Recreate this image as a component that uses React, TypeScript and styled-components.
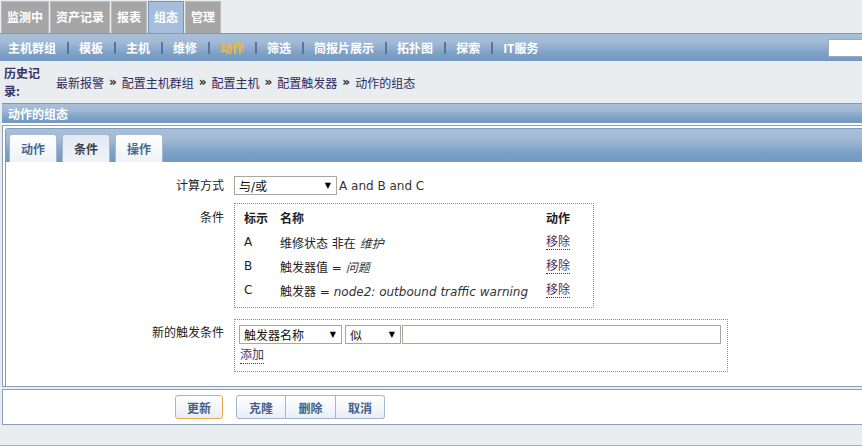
import React from "react";
import styled, { createGlobalStyle } from "styled-components";

const GlobalStyle = createGlobalStyle`
  * { box-sizing: border-box; }
  html, body { margin: 0; padding: 0; background: #e9edf0; overflow: hidden; }
  body {
    font-family: "DejaVu Sans", "Noto Sans CJK SC", sans-serif;
    font-size: 12px;
    color: #1f1f1f;
  }
  a { text-decoration: none; }
`;

const barGradient =
  "linear-gradient(to bottom, #a8bfd9 0%, #a3bad6 30%, #7da1c6 72%, #7398c0 100%)";

const Page = styled.div`
  width: 100%;
`;

const TopNav = styled.nav`
  display: flex;
  gap: 1px;
  height: 33px;
  padding: 1px 0 0 1px;
`;

const TopTab = styled.a<{ $active?: boolean }>`
  display: block;
  height: 32px;
  line-height: 30px;
  padding: 0 5px;
  border: 1px solid ${(p) => (p.$active ? "#7095bf" : "#bcbcbc")};
  border-bottom: none;
  background: ${(p) => (p.$active ? "#a6bedb" : "#a6a6a6")};
  color: #fff;
  font-weight: bold;
  font-family: "Noto Sans CJK SC", sans-serif;
`;

const SubNav = styled.div`
  display: flex;
  align-items: center;
  height: 28px;
  border-top: 1px solid #8698b1;
  background: ${barGradient};
  padding-left: 8px;
`;

const SubItem = styled.a<{ $active?: boolean }>`
  color: ${(p) => (p.$active ? "#f2b935" : "#fff")};
  font-weight: bold;
  font-family: "Noto Sans CJK SC", sans-serif;
`;

const SubSep = styled.span`
  width: 2px;
  height: 12px;
  background: #56749c;
  margin: 0 10px 0 11px;
`;

const Search = styled.input`
  margin-left: auto;
  width: 34px;
  height: 18px;
  padding: 0;
  border: 1px solid #9aabbf;
  border-right: none;
  background: #fff;
  outline: none;
`;

const Crumbs = styled.div`
  display: flex;
  align-items: center;
  height: 42px;
  padding-left: 4px;
`;

const CrumbLabel = styled.div`
  width: 40px;
  margin-right: 12px;
  line-height: 18px;
  font-weight: bold;
  color: #3c3466;
  font-family: "Noto Sans CJK SC", sans-serif;
`;

const CrumbLink = styled.a`
  color: #2e2b5f;
`;

const CrumbSep = styled.span`
  margin: 0 5px;
  font-weight: bold;
  font-size: 12px;
  color: #2a2a2a;
`;

const Section = styled.div`
  margin-left: 2px;
  background: #fff;
`;

const HeaderBar = styled.div`
  height: 20px;
  line-height: 19px;
  border-top: 1px solid #8698b1;
  background: ${barGradient};
  padding-left: 6px;
  color: #fff;
  font-weight: bold;
  font-family: "Noto Sans CJK SC", sans-serif;
`;

const FormBox = styled.div`
  margin-top: 2px;
  border: 1px solid #8c9fb6;
  border-right: none;
  padding: 2px 0 0 2px;
  background: #fff;
`;

const TabsBox = styled.div`
  border: 1px solid #7f9cbf;
  border-bottom: none;
  border-right: none;
  border-radius: 3px 0 0 0;
`;

const TabBar = styled.div`
  display: flex;
  align-items: flex-end;
  gap: 5px;
  height: 33px;
  padding-left: 3px;
  background: ${barGradient};
`;

const Tab = styled.a<{ $active?: boolean }>`
  display: block;
  height: 28px;
  line-height: 28px;
  padding: 0 11px;
  border: 1px solid #a5b8cf;
  border-bottom: none;
  border-radius: 3px 3px 0 0;
  background: ${(p) =>
    p.$active
      ? "linear-gradient(to bottom, #e2e9f2, #eef3f8)"
      : "linear-gradient(to bottom, #ffffff, #eef2f7)"};
  color: ${(p) => (p.$active ? "#3a3f4a" : "#4b6690")};
  font-weight: bold;
  font-family: "Noto Sans CJK SC", sans-serif;
`;

const Panel = styled.div`
  background: #fff;
  padding: 14px 0 14px 0;
`;

const FormRow = styled.div<{ $mt?: number }>`
  display: grid;
  grid-template-columns: 218px auto;
  column-gap: 10px;
  align-items: start;
  justify-content: start;
  margin-top: ${(p) => p.$mt ?? 0}px;
`;

const Label = styled.div<{ $pt?: number }>`
  text-align: right;
  line-height: 18px;
  padding-top: ${(p) => p.$pt ?? 0}px;
  color: #222;
`;

const Inline = styled.div`
  display: flex;
  align-items: center;
`;

const SelectBox = styled.div<{ $w: number; $ml?: number }>`
  display: inline-flex;
  align-items: center;
  justify-content: space-between;
  width: ${(p) => p.$w}px;
  height: 19px;
  margin-left: ${(p) => p.$ml ?? 0}px;
  border: 1px solid #a9a89d;
  background: #fff;
  padding: 0 5px 0 4px;
  color: #111;
  flex: none;
`;

const Arrow = styled.span`
  font-size: 8px;
  color: #000;
`;

const Formula = styled.span`
  margin-left: 2px;
  color: #333;
`;

const DottedBox = styled.div`
  border: 1px dotted #7f8c9a;
  background: #fff;
`;

const CondBox = styled(DottedBox)`
  width: 360px;
  padding: 1px 7px 5px 9px;
`;

const CondGrid = styled.div`
  display: grid;
  grid-template-columns: 36px 266px 40px;
  grid-template-rows: 25px;
  grid-auto-rows: 24px;
  align-items: center;
`;

const HeadCell = styled.div`
  font-weight: bold;
  color: #222;
  font-family: "Noto Sans CJK SC", sans-serif;
`;

const Cell = styled.div`
  color: #222;
  white-space: nowrap;
`;

const Val = styled.i`
  color: #333;
`;

const LinkBtn = styled.a`
  justify-self: start;
  color: #3a3570;
  border-bottom: 1px dotted #3a3570;
  line-height: 14px;
`;

const NewBox = styled(DottedBox)`
  width: 494px;
  padding: 5px 6px 7px 4px;
`;

const NewControls = styled.div`
  display: flex;
  align-items: center;
`;

const TextInput = styled.input`
  width: 319px;
  height: 19px;
  margin-left: 1px;
  border: 1px solid #a9a89d;
  background: #fff;
  outline: none;
`;

const AddLink = styled(LinkBtn)`
  display: inline-block;
  margin-top: 4px;
  margin-left: 1px;
  line-height: 15px;
`;

const Footer = styled.div`
  margin: 2px 0 0 2px;
  height: 36px;
  border: 1px solid #8c9fb6;
  border-right: none;
  background: #fff;
  display: flex;
  align-items: flex-start;
  padding: 5px 0 0 172px;
`;

const Button = styled.button<{ $primary?: boolean }>`
  height: 24px;
  padding: 0;
  width: ${(p) => (p.$primary ? 48 : 50)}px;
  border: 1px solid ${(p) => (p.$primary ? "#f2a64c" : "#a5b5cb")};
  border-radius: 3px;
  background: linear-gradient(to bottom, #ffffff, #e9eef5);
  color: #445f8a;
  font-weight: bold;
  font-size: 12px;
  font-family: "Noto Sans CJK SC", sans-serif;
`;

const ButtonGroup = styled.div`
  display: flex;
  margin-left: 13px;
  & > button {
    border-radius: 0;
  }
  & > button + button {
    border-left: none;
  }
  & > button:first-child {
    border-radius: 3px 0 0 3px;
  }
  & > button:last-child {
    border-radius: 0 3px 3px 0;
    width: 49px;
  }
`;

const BottomLine = styled.div`
  margin-top: 20px;
  border-top: 1px solid #9fb2c8;
`;

const topTabs = ["监测中", "资产记录", "报表", "组态", "管理"];
const subItems = ["主机群组", "模板", "主机", "维修", "动作", "筛选", "简报片展示", "拓扑图", "探索", "IT服务"];
const crumbs = ["最新报警", "配置主机群组", "配置主机", "配置触发器", "动作的组态"];

export default function App() {
  return (
    <Page>
      <GlobalStyle />
      <TopNav>
        {topTabs.map((t) => (
          <TopTab key={t} $active={t === "组态"}>
            {t}
          </TopTab>
        ))}
      </TopNav>
      <SubNav>
        {subItems.map((s, i) => (
          <React.Fragment key={s}>
            {i > 0 && <SubSep />}
            <SubItem $active={s === "动作"}>{s}</SubItem>
          </React.Fragment>
        ))}
        <Search />
      </SubNav>
      <Crumbs>
        <CrumbLabel>历史记录:</CrumbLabel>
        {crumbs.map((c, i) => (
          <React.Fragment key={c}>
            {i > 0 && <CrumbSep>»</CrumbSep>}
            <CrumbLink>{c}</CrumbLink>
          </React.Fragment>
        ))}
      </Crumbs>
      <Section>
        <HeaderBar>动作的组态</HeaderBar>
        <FormBox>
          <TabsBox>
            <TabBar>
              <Tab>动作</Tab>
              <Tab $active>条件</Tab>
              <Tab>操作</Tab>
            </TabBar>
            <Panel>
              <FormRow>
                <Label $pt={1}>计算方式</Label>
                <Inline>
                  <SelectBox $w={103}>
                    <span>与/或</span>
                    <Arrow>▼</Arrow>
                  </SelectBox>
                  <Formula>A and B and C</Formula>
                </Inline>
              </FormRow>
              <FormRow $mt={8}>
                <Label $pt={6}>条件</Label>
                <CondBox>
                  <CondGrid>
                    <HeadCell>标示</HeadCell>
                    <HeadCell>名称</HeadCell>
                    <HeadCell>动作</HeadCell>
                    <Cell>A</Cell>
                    <Cell>
                      维修状态 非在 <Val>维护</Val>
                    </Cell>
                    <LinkBtn>移除</LinkBtn>
                    <Cell>B</Cell>
                    <Cell>
                      触发器值 = <Val>问题</Val>
                    </Cell>
                    <LinkBtn>移除</LinkBtn>
                    <Cell>C</Cell>
                    <Cell>
                      触发器 = <Val>node2: outbound traffic warning</Val>
                    </Cell>
                    <LinkBtn>移除</LinkBtn>
                  </CondGrid>
                </CondBox>
              </FormRow>
              <FormRow $mt={11}>
                <Label $pt={5}>新的触发条件</Label>
                <NewBox>
                  <NewControls>
                    <SelectBox $w={103}>
                      <span>触发器名称</span>
                      <Arrow>▼</Arrow>
                    </SelectBox>
                    <SelectBox $w={56} $ml={3}>
                      <span>似</span>
                      <Arrow>▼</Arrow>
                    </SelectBox>
                    <TextInput />
                  </NewControls>
                  <AddLink>添加</AddLink>
                </NewBox>
              </FormRow>
            </Panel>
          </TabsBox>
        </FormBox>
      </Section>
      <Footer>
        <Button $primary>更新</Button>
        <ButtonGroup>
          <Button>克隆</Button>
          <Button>删除</Button>
          <Button>取消</Button>
        </ButtonGroup>
      </Footer>
      <BottomLine />
    </Page>
  );
}
